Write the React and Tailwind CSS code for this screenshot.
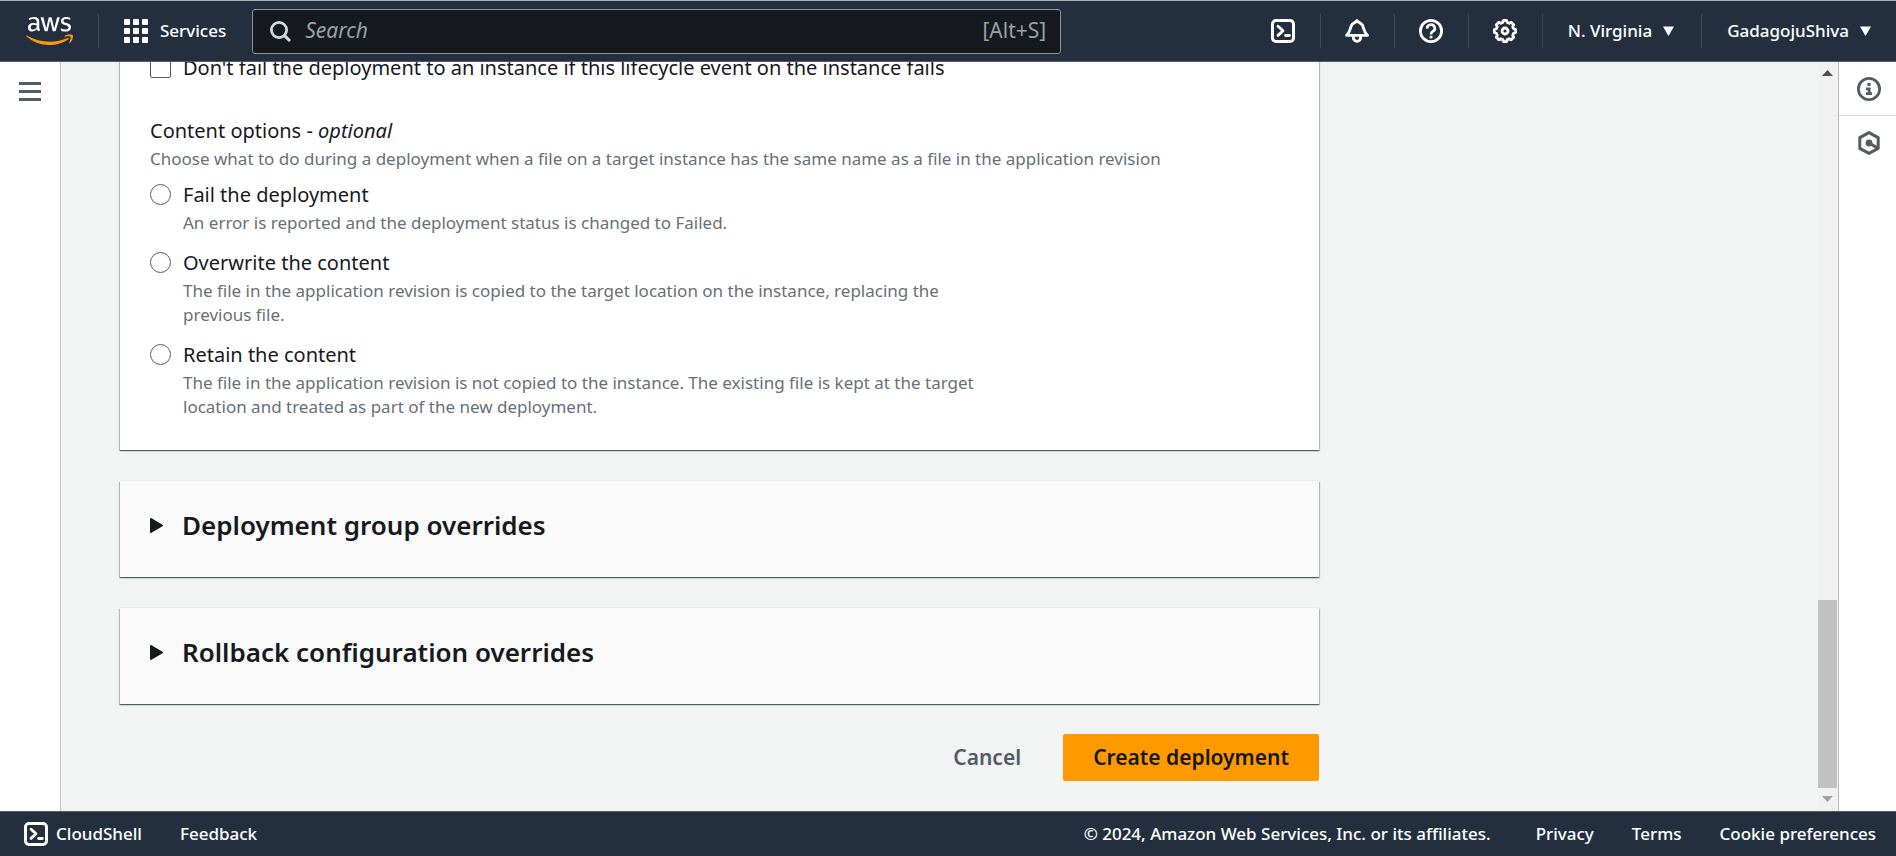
import React from "react";
import { FaAws } from "react-icons/fa";

const contentOptions = [
  {
    id: "fail",
    label: "Fail the deployment",
    lines: ["An error is reported and the deployment status is changed to Failed."],
  },
  {
    id: "overwrite",
    label: "Overwrite the content",
    lines: [
      "The file in the application revision is copied to the target location on the instance, replacing the",
      "previous file.",
    ],
  },
  {
    id: "retain",
    label: "Retain the content",
    lines: [
      "The file in the application revision is not copied to the instance. The existing file is kept at the target",
      "location and treated as part of the new deployment.",
    ],
  },
];

function AwsLogo() {
  return (
    <a href="#home" aria-label="AWS home" className="flex items-center">
      <svg width="0" height="0" aria-hidden="true" className="absolute">
        <linearGradient id="aws-fill" x1="0" y1="0" x2="0" y2="1">
          <stop offset="0.6" stopColor="#ffffff" />
          <stop offset="0.6" stopColor="#ff9900" />
        </linearGradient>
      </svg>
      <FaAws fill="url(#aws-fill)" className="h-[38px] w-[47px]" />
    </a>
  );
}

function ShellIcon() {
  return (
    <svg width="24" height="24" viewBox="0 0 24 24" fill="none" stroke="currentColor" aria-hidden="true">
      <rect x="1.5" y="1.5" width="21" height="21" rx="3.5" strokeWidth="3" />
      <path d="M7 7.2 L12 11.8 L7 16.4" strokeWidth="2.8" strokeLinecap="round" strokeLinejoin="round" />
      <path d="M14.6 16.5 H18.4" strokeWidth="2.8" strokeLinecap="round" />
    </svg>
  );
}

function BellIcon() {
  return (
    <svg width="24" height="24" viewBox="0 0 24 24" fill="none" stroke="currentColor" aria-hidden="true">
      <path
        d="M1.6 16.4 C5.4 12.6 5 9.6 6.6 6.2 C7.9 3.6 10.4 4 12 1.6 C13.6 4 16.1 3.6 17.4 6.2 C19 9.6 18.6 12.6 22.4 16.4 Z"
        strokeWidth="2.9"
        strokeLinejoin="round"
      />
      <path d="M8.4 17 V18.8 A3.6 3.6 0 0 0 15.6 18.8 V17" strokeWidth="2.9" />
    </svg>
  );
}

function HelpIcon() {
  return (
    <svg width="24" height="24" viewBox="0 0 24 24" fill="none" stroke="currentColor" aria-hidden="true">
      <circle cx="12" cy="12" r="10.6" strokeWidth="2.8" />
      <path d="M8.2 9.6 A3.8 3.6 0 1 1 13.6 12.5 Q12 13.3 12 15.6" strokeWidth="2.6" />
      <path d="M12 16.8 V19.4" strokeWidth="2.8" />
    </svg>
  );
}

function GearIcon() {
  return (
    <svg width="24" height="24" viewBox="0 0 24 24" fill="none" stroke="currentColor" aria-hidden="true">
      <path
        d="M9.8 3.4 L10.5 1.4 H13.5 L14.2 3.4 L16.3 4.3 L18.2 3.3 L20.7 5.8 L19.7 7.7 L20.6 9.8 L22.6 10.5 V13.5 L20.6 14.2 L19.7 16.3 L20.7 18.2 L18.2 20.7 L16.3 19.7 L14.2 20.6 L13.5 22.6 H10.5 L9.8 20.6 L7.7 19.7 L5.8 20.7 L3.3 18.2 L4.3 16.3 L3.4 14.2 L1.4 13.5 V10.5 L3.4 9.8 L4.3 7.7 L3.3 5.8 L5.8 3.3 L7.7 4.3 Z"
        strokeWidth="2.8"
        strokeLinejoin="round"
      />
      <circle cx="12" cy="12" r="3" strokeWidth="2.8" />
    </svg>
  );
}

function SearchIcon() {
  return (
    <svg width="21" height="21" viewBox="0 0 21 21" fill="none" stroke="currentColor" aria-hidden="true">
      <circle cx="9" cy="9" r="7.6" strokeWidth="2.8" />
      <path d="M14.4 14.4 L20 20" strokeWidth="3" />
    </svg>
  );
}

function InfoIcon() {
  return (
    <svg width="24" height="24" viewBox="0 0 24 24" fill="none" stroke="currentColor" aria-hidden="true">
      <circle cx="12" cy="12" r="10.6" strokeWidth="2.8" />
      <path d="M12 6 V9" strokeWidth="3.2" />
      <path d="M9 11.8 H12.2 V16.6 M9 16.6 H15" strokeWidth="2.8" />
    </svg>
  );
}

function HexIcon() {
  return (
    <svg width="24" height="24" viewBox="0 0 24 24" fill="none" stroke="currentColor" aria-hidden="true">
      <path d="M12 1.6 L21.2 6.6 V17.4 L12 22.4 L2.8 17.4 V6.6 Z" strokeWidth="3" strokeLinejoin="round" />
      <circle cx="12" cy="12" r="3.4" fill="currentColor" stroke="none" />
      <path d="M12 12 L20 16.6" strokeWidth="3" />
    </svg>
  );
}

function IconButton({ label, children }) {
  return (
    <button type="button" aria-label={label} className="flex w-[73px] justify-center">
      {children}
    </button>
  );
}

function Divider() {
  return <span className="h-[34px] w-px bg-[#414750]" />;
}

function MenuButton({ children }) {
  return (
    <button type="button" className="flex items-center gap-[11px] pr-[27px] pl-[25px] whitespace-nowrap last:pr-[25px]">
      {children}
      <svg width="11" height="10" viewBox="0 0 11 10" fill="currentColor" aria-hidden="true">
        <path d="M0 0.5 H11 L5.5 10 Z" />
      </svg>
    </button>
  );
}

function TopBar() {
  return (
    <header className="flex h-[62px] shrink-0 items-center border-t border-b border-t-[#aab7b8] border-b-[#545b64] bg-[#232f3e] text-[17px] font-medium text-white">
      <div className="flex shrink-0 items-center gap-[25px] pl-[26px]">
        <AwsLogo />
        <Divider />
        <button type="button" className="flex items-center gap-3 pr-[26px]">
          <svg width="24" height="24" viewBox="0 0 24 24" fill="currentColor" aria-hidden="true">
            {[0, 9, 18].map((y) =>
              [0, 9, 18].map((x) => <rect key={`${x}-${y}`} x={x} y={y} width="6" height="6" rx="1" />)
            )}
          </svg>
          Services
        </button>
      </div>
      <label className="flex h-[45px] max-w-[809px] flex-1 items-center gap-3.5 rounded-[3px] border border-[#879596] bg-[#16191f] pr-3.5 pl-[17px] text-[21px] font-normal text-[#95a5a6]">
        <span className="text-[#d5dbdb]">
          <SearchIcon />
        </span>
        <input
          type="search"
          aria-label="Search"
          placeholder="Search"
          className="min-w-0 flex-1 bg-transparent outline-none placeholder:text-[#95a5a6] placeholder:italic"
        />
        <span>[Alt+S]</span>
      </label>
      <nav className="ml-auto flex shrink-0 items-center">
        <IconButton label="CloudShell"><ShellIcon /></IconButton>
        <Divider />
        <IconButton label="Notifications"><BellIcon /></IconButton>
        <Divider />
        <IconButton label="Support"><HelpIcon /></IconButton>
        <Divider />
        <IconButton label="Settings"><GearIcon /></IconButton>
        <Divider />
        <MenuButton>N. Virginia</MenuButton>
        <Divider />
        <MenuButton>GadagojuShiva</MenuButton>
      </nav>
    </header>
  );
}

const panelShadow =
  "shadow-[0_1px_1px_0_rgba(0,28,36,0.5),1px_1px_1px_0_rgba(0,28,36,0.2),-1px_1px_1px_0_rgba(0,28,36,0.2),0_-1px_0_0_#eaeded]";

function ContentOption({ option }) {
  return (
    <div className="flex gap-3">
      <input
        type="radio"
        name="content-option"
        id={option.id}
        aria-describedby={`${option.id}-hint`}
        className="mt-[3px] size-[21px] shrink-0 appearance-none rounded-full border border-[#545b64] bg-white checked:border-[6px] checked:border-[#0073bb]"
      />
      <div>
        <label htmlFor={option.id} className="block text-[20px] leading-7 text-[#16191f]">
          {option.label}
        </label>
        <p id={`${option.id}-hint`} className="mt-0.5 text-[17px] leading-6 text-[#687078]">
          {option.lines.map((line) => (
            <span key={line} className="block">{line}</span>
          ))}
        </p>
      </div>
    </div>
  );
}

function DeploymentSettings() {
  return (
    <section className={`shrink-0 bg-white px-[30px] pt-24 pb-[31px] ${panelShadow}`}>
      <div className="flex gap-3">
        <input
          type="checkbox"
          id="ignore-failure"
          className="mt-[3px] size-[21px] shrink-0 appearance-none rounded-xs border border-[#545b64] bg-white checked:bg-[#0073bb]"
        />
        <label htmlFor="ignore-failure" className="text-[20px] leading-7">
          Don't fail the deployment to an instance if this lifecycle event on the instance fails
        </label>
      </div>
      <fieldset className="mt-[35px]">
        <legend className="text-[20px] leading-7">
          Content options - <i>optional</i>
        </legend>
        <p className="mt-0.5 text-[17px] leading-6 text-[#687078]">
          Choose what to do during a deployment when a file on a target instance has the same name as a file in the application revision
        </p>
        <div className="mt-2.5 flex flex-col gap-3.5">
          {contentOptions.map((option) => (
            <ContentOption key={option.id} option={option} />
          ))}
        </div>
      </fieldset>
    </section>
  );
}

function CollapsedPanel({ title }) {
  return (
    <section className={`flex h-24 shrink-0 bg-[#fafafa] px-[30px] ${panelShadow}`}>
      <h2 className="pt-[26px]">
        <button type="button" aria-expanded="false" className="flex items-center gap-[19px] text-[26px] leading-9 font-semibold">
          <svg width="13" height="15" viewBox="0 0 13 15" aria-hidden="true">
            <path d="M1 1 V14 L12 7.5 Z" fill="currentColor" stroke="currentColor" strokeWidth="2" strokeLinejoin="round" />
          </svg>
          {title}
        </button>
      </h2>
    </section>
  );
}

function ScrollTrack() {
  return (
    <div className="flex w-5 shrink-0 flex-col items-center bg-[#f1f1f1] pr-px" aria-hidden="true">
      <svg width="11" height="6" viewBox="0 0 11 6" className="mt-2" fill="#505050"><path d="M0 6 L5.5 0 L11 6 Z" /></svg>
      <span className="mt-auto h-[188px] w-full bg-[#c1c1c1]" />
      <svg width="11" height="6" viewBox="0 0 11 6" className="mt-2 mb-[9px]" fill="#a3a3a3"><path d="M0 0 L5.5 6 L11 0 Z" /></svg>
    </div>
  );
}

function Footer() {
  return (
    <footer className="flex h-[45px] shrink-0 items-center border-t border-[#545b64] bg-[#232f3e] pr-5 pl-6 text-[17px] font-medium whitespace-nowrap text-white">
      <button type="button" className="flex items-center gap-2"><ShellIcon />CloudShell</button>
      <a href="#feedback" className="ml-[38px]">Feedback</a>
      <p className="ml-auto">© 2024, Amazon Web Services, Inc. or its affiliates.</p>
      <nav className="ml-[45px] flex gap-[38px]">
        <a href="#privacy">Privacy</a>
        <a href="#terms">Terms</a>
        <a href="#cookies">Cookie preferences</a>
      </nav>
    </footer>
  );
}

export default function App() {
  return (
    <div className="flex h-screen flex-col overflow-hidden bg-[#f2f3f3] font-['Noto_Sans',sans-serif] text-[#16191f]">
      <TopBar />
      <div className="flex min-h-0 flex-1">
        <aside className="w-[61px] shrink-0 border-r border-[#c0c6c8] bg-white">
          <button type="button" aria-label="Open navigation" className="mt-5 ml-[19px] flex w-[22px] flex-col gap-[5px]">
            <span className="h-[3px] w-full bg-[#545b64]" />
            <span className="h-[3px] w-full bg-[#545b64]" />
            <span className="h-[3px] w-full bg-[#545b64]" />
          </button>
        </aside>
        <main className="flex min-w-0 flex-1 flex-col justify-end overflow-hidden pr-10 pb-[30px] pl-[59px]">
          <div className="flex w-full max-w-[1199px] flex-col gap-[31px]">
            <DeploymentSettings />
            <CollapsedPanel title="Deployment group overrides" />
            <CollapsedPanel title="Rollback configuration overrides" />
            <div className="-mt-px flex justify-end gap-3 text-[21px] font-semibold">
              <button type="button" className="px-[30px] text-[#545b64]">Cancel</button>
              <button type="button" className="h-[47px] rounded-xs bg-[#ff9900] px-[30px]">Create deployment</button>
            </div>
          </div>
        </main>
        <ScrollTrack />
        <aside className="flex w-[58px] shrink-0 flex-col border-l border-[#b4bbbd] bg-white text-[#545b64]">
          <button type="button" aria-label="Info" className="flex h-[54px] items-center justify-center border-b border-[#d5dbdb] pl-0.5">
            <InfoIcon />
          </button>
          <button type="button" aria-label="Tutorials" className="flex h-[54px] items-center justify-center pl-0.5">
            <HexIcon />
          </button>
        </aside>
      </div>
      <Footer />
    </div>
  );
}
